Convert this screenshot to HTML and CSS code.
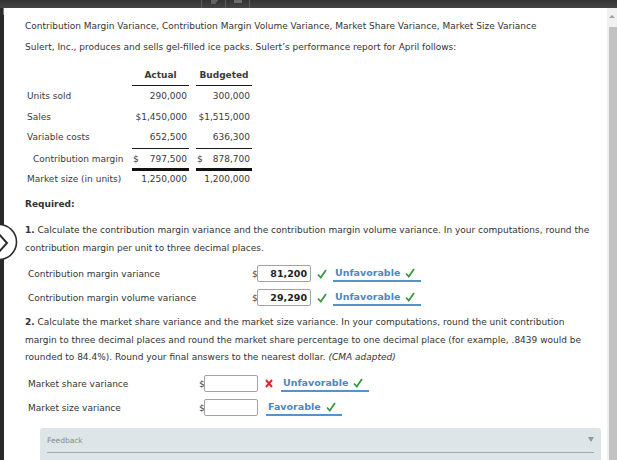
FILE: index.html
```html
<!DOCTYPE html>
<html lang="en">
<head>
  <meta charset="UTF-8">
  <title>Contribution Margin Variance</title>
  <link rel="stylesheet" href="styles.css">
</head>
<body>
  <div class="topbar">
    <span class="sep"></span>
    <span class="tb-icon speaker"></span>
    <span class="sep"></span>
    <span class="tb-icon box"></span>
    <span class="sep"></span>
  </div>

  <div class="frame">
    <div class="rail">
      <span class="focus-mark"></span>
      <button class="next-btn" aria-label="Next">
        <svg width="38" height="38" viewBox="0 0 38 38">
          <circle cx="19" cy="19" r="17.5" fill="#fff" stroke="#2d2d2d" stroke-width="1.6"/>
          <polyline points="18,10 27,20 18,30" fill="none" stroke="#2d2d2d" stroke-width="2"/>
        </svg>
      </button>
    </div>

    <main class="content">
      <p class="title">Contribution Margin Variance, Contribution Margin Volume Variance, Market Share Variance, Market Size Variance</p>
      <p class="intro">Sulert, Inc., produces and sells gel-filled ice packs. Sulert’s performance report for April follows:</p>

      <div class="perf">
        <div class="cell"></div>
        <div class="cell head">Actual</div>
        <div class="cell head">Budgeted</div>

        <div class="cell label">Units sold</div>
        <div class="cell num">290,000</div>
        <div class="cell num">300,000</div>

        <div class="cell label">Sales</div>
        <div class="cell num">$1,450,000</div>
        <div class="cell num">$1,515,000</div>

        <div class="cell label">Variable costs</div>
        <div class="cell num sub">652,500</div>
        <div class="cell num sub">636,300</div>

        <div class="cell label total-label indent">Contribution margin</div>
        <div class="cell num total"><span>$</span> 797,500</div>
        <div class="cell num total"><span>$</span> 878,700</div>

        <div class="cell label last">Market size (in units)</div>
        <div class="cell num last">1,250,000</div>
        <div class="cell num last">1,200,000</div>
      </div>

      <p class="required">Required:</p>

      <p class="question q1"><b>1.</b> Calculate the contribution margin variance and the contribution margin volume variance. In your computations, round the contribution margin per unit to three decimal places.</p>

      <div class="answer wide">
        <span class="label">Contribution margin variance</span>
        <span class="dollar">$</span>
        <input class="amount" type="text" value="81,200">
        <span class="mark ok"><svg width="10" height="10" viewBox="0 0 10 10"><polyline points="1,5.5 3.8,8.5 9,1" fill="none" stroke="#3a9a3a" stroke-width="1.8"/></svg></span>
        <span class="choice">Unfavorable<svg width="10" height="10" viewBox="0 0 10 10"><polyline points="1,5.5 3.8,8.5 9,1" fill="none" stroke="#3a9a3a" stroke-width="1.8"/></svg></span>
      </div>
      <div class="answer wide">
        <span class="label">Contribution margin volume variance</span>
        <span class="dollar">$</span>
        <input class="amount" type="text" value="29,290">
        <span class="mark ok"><svg width="10" height="10" viewBox="0 0 10 10"><polyline points="1,5.5 3.8,8.5 9,1" fill="none" stroke="#3a9a3a" stroke-width="1.8"/></svg></span>
        <span class="choice">Unfavorable<svg width="10" height="10" viewBox="0 0 10 10"><polyline points="1,5.5 3.8,8.5 9,1" fill="none" stroke="#3a9a3a" stroke-width="1.8"/></svg></span>
      </div>

      <p class="question q2"><b>2.</b> Calculate the market share variance and the market size variance. In your computations, round the unit contribution margin to three decimal places and round the market share percentage to one decimal place (for example, .8439 would be rounded to 84.4%). Round your final answers to the nearest dollar. <i>(CMA adapted)</i></p>

      <div class="answer narrow">
        <span class="label">Market share variance</span>
        <span class="dollar">$</span>
        <input class="amount" type="text" value="">
        <span class="mark bad"><svg width="8" height="9" viewBox="0 0 8 9"><path d="M1,1 L7,8 M7,1 L1,8" stroke="#e3262b" stroke-width="2"/></svg></span>
        <span class="choice">Unfavorable<svg width="10" height="10" viewBox="0 0 10 10"><polyline points="1,5.5 3.8,8.5 9,1" fill="none" stroke="#3a9a3a" stroke-width="1.8"/></svg></span>
      </div>
      <div class="answer narrow">
        <span class="label">Market size variance</span>
        <span class="dollar">$</span>
        <input class="amount" type="text" value="">
        <span class="choice plain">Favorable<svg width="10" height="10" viewBox="0 0 10 10"><polyline points="1,5.5 3.8,8.5 9,1" fill="none" stroke="#3a9a3a" stroke-width="1.8"/></svg></span>
      </div>

      <div class="feedback">
        <div class="feedback-head">Feedback</div>
        <span class="caret"></span>
      </div>
    </main>

    <div class="scrollbar">
      <span class="arrow"></span>
      <span class="thumb"></span>
    </div>
  </div>
</body>
</html>
```

FILE: styles.css
```css
html, body {
  margin: 0;
  padding: 0;
  height: 100%;
  overflow: hidden;
  background-color: #fff;
  font-family: 'DejaVu Sans', Verdana, sans-serif;
  font-size: 9px;
  color: #333;
}

p {
  margin: 0;
}

/* top player bar */
.topbar {
  height: 8px;
  background: linear-gradient(#333, #454545);
  display: flex;
  padding-left: 201px;
}

.sep {
  width: 1px;
  background-color: #5e5e5e;
}

.tb-icon {
  width: 23px;
  position: relative;
}

.speaker::after {
  content: '';
  position: absolute;
  left: 9px;
  top: 0;
  width: 7px;
  height: 4px;
  background-color: #636363;
  clip-path: polygon(0 0, 100% 0, 60% 100%, 0 100%);
}

.box::after {
  content: '';
  position: absolute;
  left: 8px;
  top: 0;
  width: 8px;
  height: 3px;
  background-color: #6c6c6c;
}

.frame {
  display: flex;
  height: calc(100% - 8px);
}

.rail {
  width: 4px;
  background-color: #2a2a2a;
  position: relative;
  z-index: 2;
}

.focus-mark {
  position: absolute;
  right: 0;
  top: 0;
  width: 1px;
  height: 7px;
  background-color: #4d7fc4;
}

.next-btn {
  position: absolute;
  left: -20px;
  top: 215px;
  padding: 0;
  border: none;
  background: none;
  width: 38px;
  height: 38px;
}

.next-btn svg {
  display: block;
}

.content {
  flex: 1;
  padding-left: 21px;
}

.title {
  line-height: 17px;
  margin-top: 9.5px;
}

.intro {
  line-height: 17px;
  margin-top: 4px;
}

/* performance report */
.perf {
  display: grid;
  grid-template-columns: 100px 57px 56px;
  column-gap: 7px;
  margin-top: 9px;
  color: #3a3a3a;
}

.cell {
  line-height: 20.5px;
  white-space: nowrap;
}

.head {
  font-weight: bold;
  text-align: center;
  border-bottom: 1px solid #1a1a1a;
}

.label {
  padding-left: 2px;
}

.indent {
  padding-left: 8px;
}

.num {
  text-align: right;
  padding-right: 2px;
}

.sub {
  border-bottom: 1px solid #1a1a1a;
}

.total, .total-label {
  line-height: 17px;
  padding-top: 2px;
}

.total {
  border-bottom: 3px solid #111;
}

.total span {
  float: left;
  padding-left: 1px;
}

.cell.last {
  line-height: 17px;
}

.required {
  font-weight: bold;
  line-height: 17px;
  margin-top: 8.5px;
}

.question {
  line-height: 17.5px;
  margin-right: 12px;
}

.q1 {
  margin-top: 9px;
}

/* answer rows */
.answer {
  display: flex;
  align-items: center;
  height: 24px;
  padding-left: 3px;
}

.q1 + .answer {
  margin-top: 4.5px;
}

.answer + .q2 {
  margin-top: 4.5px;
}

.q2 + .answer {
  margin-top: 5px;
}

.answer .label {
  padding-left: 0;
  flex: none;
}

.wide .label {
  width: 224px;
}

.narrow .label {
  width: 171px;
}

.dollar {
  width: 5px;
  overflow: visible;
  color: #444;
}

.amount {
  box-sizing: border-box;
  width: 54px;
  height: 17px;
  margin: 0;
  padding: 0 3px 0 0;
  border: 1px solid #a3a3a3;
  border-radius: 2px;
  font-family: inherit;
  font-size: 9.5px;
  font-weight: bold;
  text-align: right;
  color: #222;
  background: #fff;
}

.mark {
  display: flex;
}

.ok {
  margin-left: 6px;
}

.bad {
  margin-left: 7px;
}

.choice {
  display: inline-flex;
  align-items: center;
  gap: 5px;
  height: 14px;
  margin-left: 6px;
  padding: 0 6px 0 2px;
  border-bottom: 2px solid #5393ce;
  color: #4a88c4;
  font-weight: bold;
  font-size: 9.5px;
}

.narrow .choice {
  margin-left: 8px;
}

/* feedback panel */
.feedback {
  position: relative;
  margin: 8px 6px 0 15px;
  padding: 7px 7px 0;
  height: 40px;
  background-color: #dde5e8;
  border-radius: 3px 3px 0 0;
}

.feedback-head {
  font-size: 7.5px;
  line-height: 12px;
  padding-bottom: 5px;
  color: #7f8d93;
  border-bottom: 1px solid #9ba7ab;
}

.caret {
  position: absolute;
  right: 7px;
  top: 9px;
  width: 0;
  height: 0;
  border-left: 3px solid transparent;
  border-right: 3px solid transparent;
  border-top: 5px solid #8e999d;
}

/* scrollbar */
.scrollbar {
  width: 10px;
  background-color: #f0f0f0;
  display: flex;
  flex-direction: column;
  align-items: flex-end;
}

.arrow {
  margin: 7px 0 0;
  width: 0;
  height: 0;
  border-left: 3px solid transparent;
  border-right: 3px solid transparent;
  border-bottom: 3px solid #a0a0a0;
  align-self: center;
}

.thumb {
  margin-top: 9px;
  width: 8px;
  flex: 1;
  background-color: #c1c1c1;
}
```
